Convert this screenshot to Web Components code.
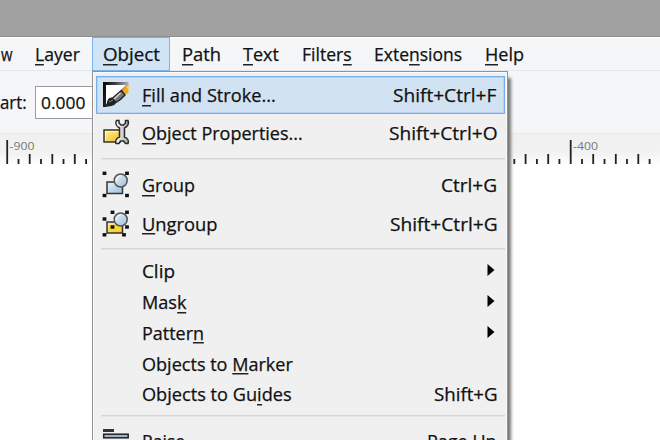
<!DOCTYPE html>
<html lang="en"><head><meta charset="utf-8"><title>Object menu</title>
<style>
html,body{margin:0;width:660px;height:440px;overflow:hidden;background:#fff;font:18px "Open Sans","Noto Sans",sans-serif;color:#111}
</style></head><body><app-window></app-window>
<script>
const define=(name,html,init)=>customElements.define(name,class extends HTMLElement{
  constructor(){super();this.attachShadow({mode:'open'});}
  connectedCallback(){this.shadowRoot.innerHTML=html;if(init)init(this,this.shadowRoot);}
});
const pen=document.createElement('canvas').getContext('2d');

/* A label whose ink spans exactly `w` pixels; `_` marks the mnemonic letter. */
define('fit-label',`<style>:host{display:block;flex:none;white-space:pre;line-height:24px;height:24px}
span{display:inline-block;transform-origin:0 50%;-webkit-text-stroke:.25px #111}
u{text-decoration:none;background:linear-gradient(#222,#222) 0 calc(100% - 1px)/100% 1.5px no-repeat}</style><span></span>`,(el,root)=>{
  const raw=el.getAttribute('text'),size=+(el.getAttribute('size')||18),w=+el.getAttribute('w');
  const plain=raw.replace('_',''),s=root.querySelector('span');
  s.innerHTML=raw.replace(/_(.)/,'<u>$1</u>');
  s.style.fontSize=size+'px';
  pen.font=size+'px "Open Sans","Noto Sans",sans-serif';
  const m=pen.measureText(plain),left=-m.actualBoundingBoxLeft,k=w/(m.actualBoundingBoxRight-left);
  el.style.width=w+'px';
  s.style.transform=`translateX(${-left*k}px) scaleX(${k})`;
});

define('menu-title',`<style>:host{display:flex;box-sizing:border-box;height:34px;padding-top:4px;border:1px solid transparent;border-bottom:0}
:host([open]){background:#d1e4f6;border:1px solid #7db3ec}</style><slot></slot>`);

define('menu-bar',`<style>:host{display:flex;box-sizing:border-box;height:34px;background:#f5f6f7;border-top:1px solid #fff;border-bottom:1px solid #e6e8eb}
menu-title{margin-top:-1px}</style>
<menu-title style="width:24px"><fit-label text="w" w="11.5"></fit-label></menu-title>
<menu-title style="width:68px;padding-left:11px"><fit-label text="_Layer" w="44.5"></fit-label></menu-title>
<menu-title open style="width:78px;padding-left:10.5px"><fit-label text="_Object" w="55.5"></fit-label></menu-title>
<menu-title style="width:61px;padding-left:11.5px"><fit-label text="_Path" w="37"></fit-label></menu-title>
<menu-title style="width:60px;padding-left:11px"><fit-label text="_Text" w="35.5"></fit-label></menu-title>
<menu-title style="width:71px;padding-left:11px"><fit-label text="Filter_s" w="48"></fit-label></menu-title>
<menu-title style="width:111px;padding-left:11.5px"><fit-label text="Exte_nsions" w="86.5"></fit-label></menu-title>
<menu-title style="padding-left:12px"><fit-label text="_Help" w="38"></fit-label></menu-title>`);

define('tool-bar',`<style>:host{display:flex;box-sizing:border-box;height:63px;padding-top:15px;background:#f5f6f8;border-bottom:1px solid #e7e9ec}
fit-label{margin-top:4px}
div{box-sizing:border-box;margin-left:9px;width:80px;height:33px;border:1px solid #999da3;background:#fff;padding-left:5px}
div fit-label{margin-top:3px}</style>
<fit-label text="art:" w="26"></fit-label><div><fit-label text="0.000" size="16.5" w="44"></fit-label></div>`);

define('ruler-strip',`<style>:host{display:block;height:31px;background:linear-gradient(#f0f0f0,#f2f2f2 60%,#fff)}svg{display:block}text{font:11.5px "Open Sans",sans-serif;fill:#777}</style>
<svg width="660" height="31"><g id="t" fill="#222"></g><text x="9.5" y="15.5" textLength="25" lengthAdjust="spacingAndGlyphs">-900</text><text x="573" y="15.5" textLength="25" lengthAdjust="spacingAndGlyphs">-400</text></svg>`,(el,root)=>{
  let out='';
  for(let k=0;k<58;k++){const x=6.5+k*11.27,h=k%10===0?24:k%2?5:10;out+=`<rect x="${(x-.2).toFixed(1)}" y="${30-h}" width="1.8" height="${h}"/>`;}
  root.getElementById('t').innerHTML=out;
});

const dot=(x,y)=>`<rect x="${x-1.9}" y="${y-1.7}" width="3.8" height="3.4" fill="#111"/>`;
const defs=`<defs><linearGradient id="b" x2="1" y2="1"><stop stop-color="#e8f3fc"/><stop offset="1" stop-color="#9dbedd"/></linearGradient>
<linearGradient id="y" x2="1" y2="1"><stop stop-color="#fff2a0"/><stop offset="1" stop-color="#f3bd1e"/></linearGradient>
<linearGradient id="k" x1="0" x2="1" y1="0" y2=".2"><stop stop-color="#000"/><stop offset=".5" stop-color="#444"/><stop offset="1" stop-color="#bbb"/></linearGradient>
<linearGradient id="g" x2="1"><stop stop-color="#fff"/><stop offset="1" stop-color="#aaa"/></linearGradient></defs>`;
const icons={
 fill:`<path d="M1 1h25.500v3L4 26H1z" fill="url(#k)"/><path d="M4 4h20L4 23.500z" fill="#fff"/><path d="M26.500 3.500v8l-3.500 2.500-3.500-4z" fill="#f3a91d"/><path d="M24.500 6l2-1v3.500z" fill="#ffdf77"/><path d="M19.500 9.500l3.500 4.500c-3 3.500-5.500 5.500-9 7.500l-4-4z" fill="#777" stroke="#222" stroke-width="1.300"/><path d="M18.500 12l-6.500 6" stroke="#ddd" stroke-width="1.300"/><path d="M10 16.500l4.500 4.500c-1.500 4-6 4.500-13 5 4-2 3-4 4-6.500.8-2 2-2.700 4.500-3z" fill="#222"/><path d="M7 21l4-2" stroke="#888"/>`,
 props:`<path d="M2 11h16v12H2z" fill="url(#y)" stroke="#333" stroke-width="1.500"/><path d="M3.500 21.500v-9h13" fill="none" stroke="#fff" opacity=".65"/><path d="M14.500 1.500c-1.500 3 0 6 3 7.500v9c-3 1-4.500 3.500-3.500 6.500h3l1.500-2.500h3l2 2.500H26c1-3-.5-5.500-3.500-6.500v-9c3-1.500 4.500-4.500 3.500-7.500h-2.500V4l-2 2h-2.500l-2-2V1.500z" fill="url(#g)" stroke="#2b2b2b" stroke-width="1.500"/>`,
 group:`<path d="M5 11h15.500v11.500H5z" fill="url(#b)" stroke="#333" stroke-width="1.500"/><circle cx="18.700" cy="9.500" r="6.500" fill="url(#b)" stroke="#555" stroke-width="1.500"/><path d="M14.500 10a5 5 0 0 1 4-5" stroke="#fff" fill="none"/>`+dot(2.5,2.3)+dot(25,2.3)+dot(2.5,24.5)+dot(25,24.5),
 ungroup:`<path d="M5 12h15.500V23H5z" fill="url(#y)" stroke="#333" stroke-width="1.500"/><path d="M7 15h12v6H7z" fill="#ffd62e"/><circle cx="18.700" cy="9.500" r="6.500" fill="url(#b)" stroke="#555" stroke-width="1.500"/><path d="M14.500 10a5 5 0 0 1 4-5" stroke="#fff" fill="none"/>`+dot(10.5,2.3)+dot(25,2.3)+dot(2.5,9)+dot(25,17)+dot(10.500,17)+dot(2.5,24.8)+dot(22,24.8),
 raise:`<rect x="1" y="2" width="11" height="3" fill="#333"/><rect x="1.700" y="7.200" width="24.500" height="3.600" fill="#9db4c9" stroke="#222" stroke-width="1.500"/><rect x="1" y="15" width="16" height="3" fill="#333"/>`
};
define('menu-icon',`<style>:host{display:block;flex:none;width:28px;height:28px}svg{display:block}</style>`,(el,root)=>{
  root.innerHTML+=`<svg width="28" height="28" viewBox="0 0 28 28">${defs}${icons[el.getAttribute('name')]||''}</svg>`;
});

define('menu-item',`<style>:host{display:flex;box-sizing:border-box;align-items:center;height:38.500px;padding:0 8px 0 5px;border:1px solid transparent}
:host([small]){height:30.750px}
:host([selected]){background:#d1e2f3;border-color:#76aeea;box-shadow:inset 0 0 0 .5px #9cc5ef}
.text{margin-left:13px;flex:1;display:flex}.arrow{margin-right:1px;position:relative;top:-1px}</style>`,(el,root)=>{
  const a=n=>el.getAttribute(n),small=a('small')!==null;
  const icon=a('icon')?`<menu-icon name="${a('icon')}"></menu-icon>`:'<menu-icon style="height:0"></menu-icon>';
  root.innerHTML+=icon+`<div class="text"><fit-label text="${a('text')}" w="${a('w')}"></fit-label></div>`+
   (a('sub')!==null?'<svg class="arrow" width="8" height="12"><path d="M.5 0L7.500 6L.5 12z" fill="#000"/></svg>':a('key')?`<fit-label text="${a('key')}" w="${a('kw')}"></fit-label>`:'');
});
define('menu-rule',`<style>:host{display:flex;align-items:center;height:13px;padding-left:5px}i{flex:1;height:1px;background:#d6d6d6;margin-bottom:2px;box-shadow:0 1px #e5e5e5}</style><i></i>`);

define('drop-menu',`<style>:host{display:block;box-sizing:border-box;width:416px;height:400px;padding:4px 2px 0 3px;background:#f0f0f0;border:1px solid #929292;box-shadow:inset 0 0 0 1px #fafafa,4px 6px 3px -1px #777}
menu-item[selected]{height:38px}menu-item[icon=raise]{margin-top:-1.5px}</style>
<menu-item selected icon="fill" text="_Fill and Stroke..." w="132" key="Shift+Ctrl+F" kw="103"></menu-item>
<menu-item icon="props" text="_Object Properties..." w="159" key="Shift+Ctrl+O" kw="107.5"></menu-item>
<menu-rule style="height:13.5px"></menu-rule>
<menu-item icon="group" text="_Group" w="52" key="Ctrl+G" kw="54"></menu-item>
<menu-item icon="ungroup" text="_Ungroup" w="74.5" key="Shift+Ctrl+G" kw="106.5"></menu-item>
<menu-rule></menu-rule>
<menu-item small text="Clip" w="32" sub></menu-item>
<menu-item small text="Mas_k" w="44" sub></menu-item>
<menu-item small text="Patter_n" w="60" sub></menu-item>
<menu-item small text="Objects to _Marker" w="150.5"></menu-item>
<menu-item small text="Objects to Gu_ides" w="148" key="Shift+G" kw="62.5"></menu-item>
<menu-rule></menu-rule>
<menu-item icon="raise" text="Raise" w="42" key="Page Up" kw="68.5"></menu-item>`);

define('app-window',`<style>:host{display:flex;flex-direction:column;width:660px;height:440px;position:relative;overflow:hidden}
header{height:36px;background:#a1a1a1;border-bottom:1px solid #8d8d8d;flex:none}
drop-menu{position:absolute;left:92px;top:71px}</style>
<header></header><menu-bar></menu-bar><tool-bar></tool-bar><ruler-strip></ruler-strip><drop-menu></drop-menu>`);
</script></body></html>
